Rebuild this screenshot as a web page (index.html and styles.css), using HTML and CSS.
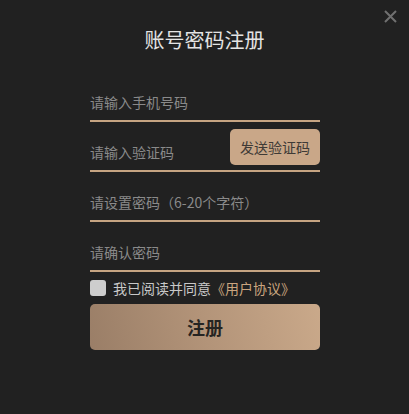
FILE: index.html
```html
<!DOCTYPE html>
<html lang="zh-CN">
<head>
<meta charset="utf-8">
<title>账号密码注册</title>
<link rel="stylesheet" href="styles.css">
</head>
<body>
<div class="dialog">
  <button class="close" aria-label="关闭">
    <svg width="13" height="13" viewBox="0 0 13 13"><path d="M1 1L12 12M12 1L1 12" stroke="#707070" stroke-width="2" fill="none"/></svg>
  </button>
  <h1 class="title">账号密码注册</h1>
  <form class="form">
    <div class="field"><input class="input" type="text" placeholder="请输入手机号码"></div>
    <div class="field"><input class="input" type="text" placeholder="请输入验证码"><button type="button" class="send">发送验证码</button></div>
    <div class="field"><input class="input" type="password" placeholder="请设置密码（6-20个字符）"></div>
    <div class="field"><input class="input" type="password" placeholder="请确认密码"></div>
    <label class="agree"><input class="check" type="checkbox"><span>我已阅读并同意<span class="link">《用户协议》</span></span></label>
    <button type="button" class="submit">注册</button>
  </form>
</div>
</body>
</html>
```
FILE: styles.css
```css
* { box-sizing: border-box; }
html, body { margin: 0; padding: 0; }
body {
  background: #212121;
  font-family: "Noto Sans CJK SC", "Noto Sans", sans-serif;
}
.dialog {
  position: relative;
  width: 409px;
  height: 414px;
  padding-top: 28px;
  background: #212121;
}
.close {
  position: absolute;
  top: 10px;
  right: 12px;
  width: 13px;
  height: 13px;
  padding: 0;
  border: 0;
  background: none;
  display: block;
  cursor: pointer;
}
.close svg { display: block; }
.title {
  margin: 0;
  height: 24px;
  line-height: 24px;
  font-size: 20px;
  font-weight: normal;
  text-align: center;
  color: #e4e4e4;
}
.form {
  width: 230px;
  margin: 20px 0 0 90px;
  display: flex;
  flex-direction: column;
}
.field {
  height: 50px;
  border-bottom: 2px solid #c6a482;
  display: flex;
  align-items: center;
}
.input {
  flex: 1;
  min-width: 0;
  height: 20px;
  margin-top: 11px;
  padding: 0;
  border: 0;
  outline: none;
  background: transparent;
  font-family: inherit;
  font-size: 14px;
  line-height: 20px;
  color: #e0e0e0;
}
.input::placeholder { color: #8a8a8a; }
.send {
  width: 90px;
  height: 36px;
  margin-top: 2px;
  padding: 0;
  border: 0;
  border-radius: 5px;
  background: #c9a788;
  color: #3e3a36;
  font-family: inherit;
  font-size: 14px;
  cursor: pointer;
}
.agree {
  margin-top: 8px;
  height: 16px;
  display: flex;
  align-items: center;
  gap: 7px;
  font-size: 14px;
  line-height: 16px;
  color: #c8c8c8;
  cursor: pointer;
}
.check {
  appearance: none;
  -webkit-appearance: none;
  width: 16px;
  height: 16px;
  margin: 0;
  border-radius: 3px;
  background: #cdcdcd;
}
.link { color: #caa57f; }
.submit {
  margin-top: 8px;
  height: 46px;
  border: 0;
  border-radius: 5px;
  background: linear-gradient(75deg, #9a7e67 0%, #b39479 50%, #caa98a 100%);
  color: #262422;
  font-family: inherit;
  font-size: 18px;
  font-weight: bold;
  cursor: pointer;
}
```
